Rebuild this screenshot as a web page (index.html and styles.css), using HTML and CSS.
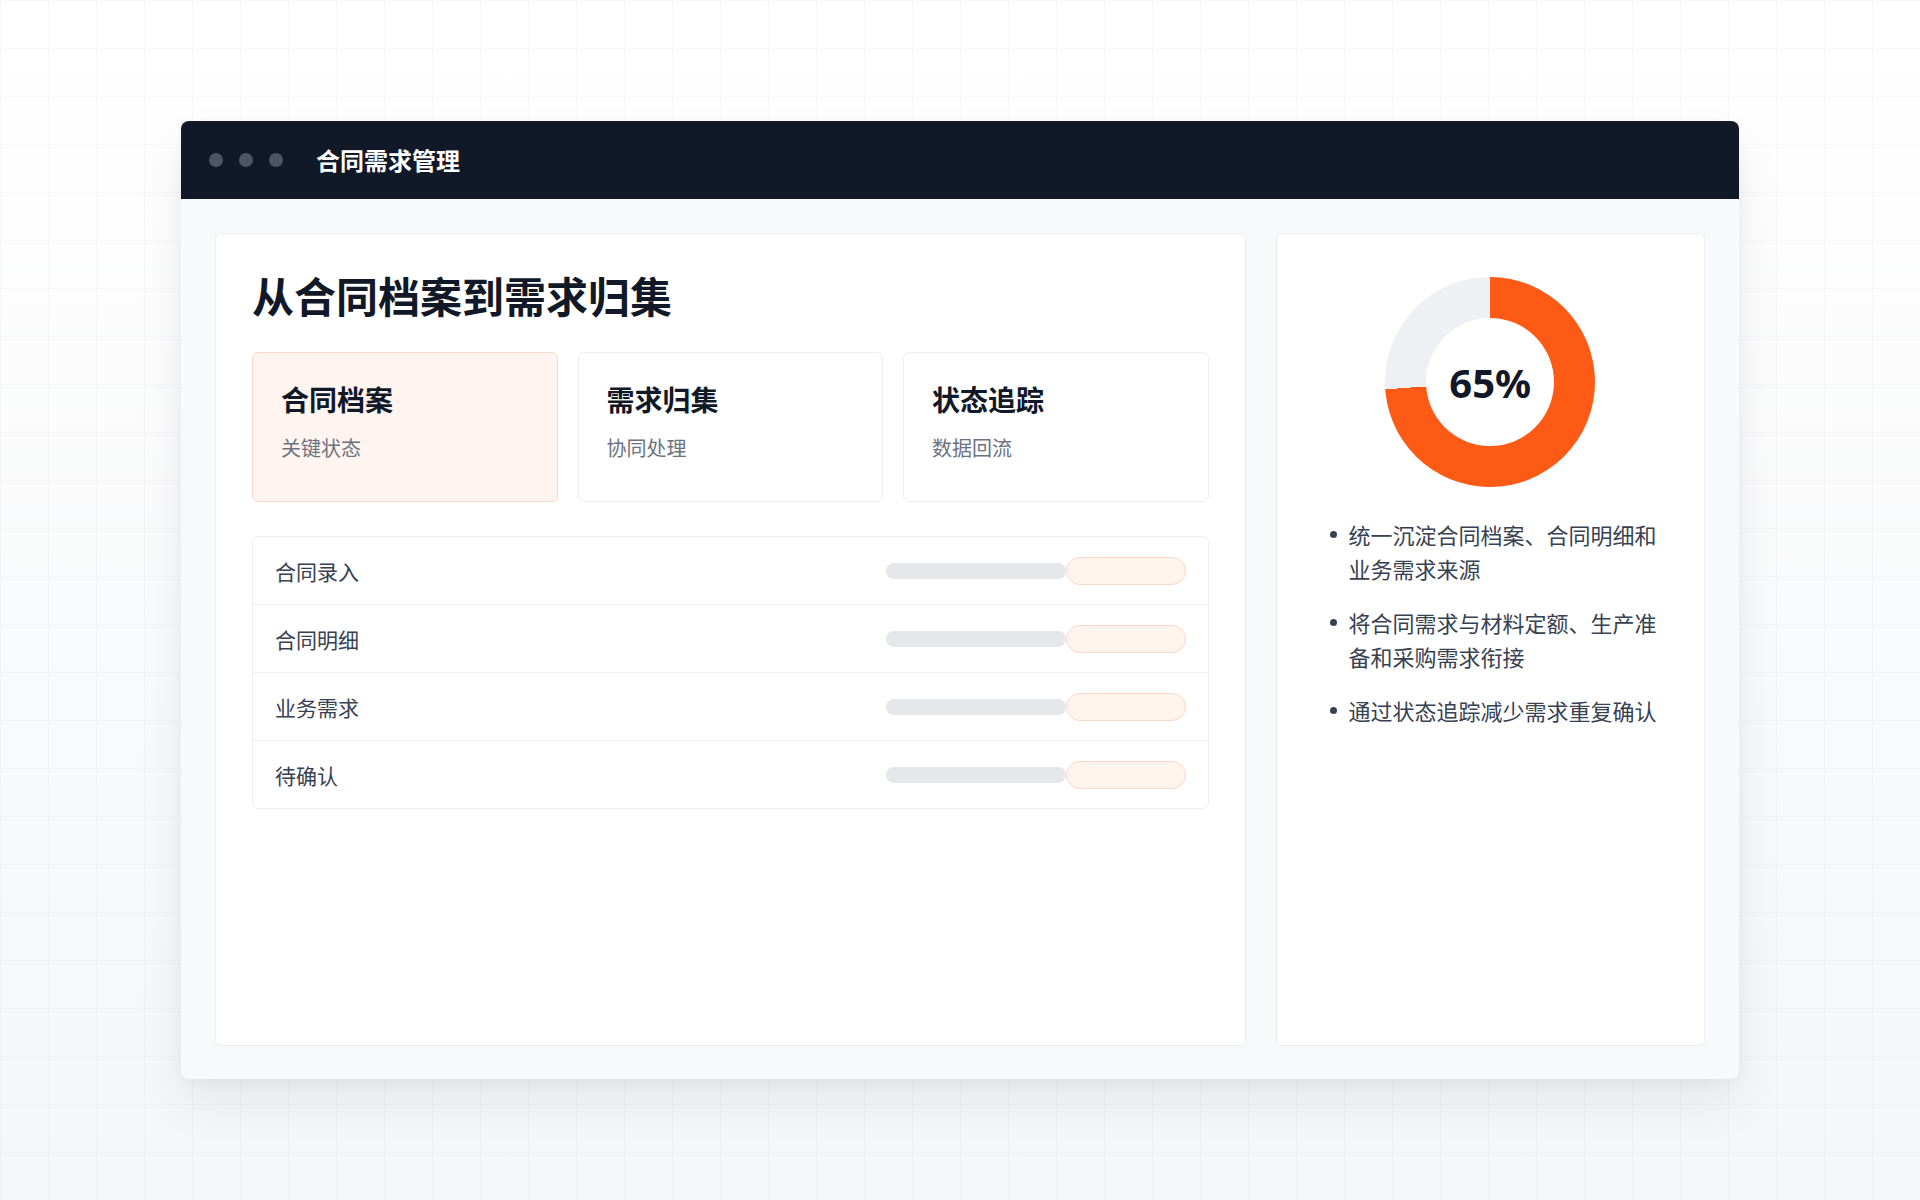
FILE: index.html
```html
<!DOCTYPE html>
<html lang="zh-CN">
<head>
<meta charset="utf-8">
<title>合同需求管理</title>
<link rel="stylesheet" href="styles.css">
</head>
<body>
<div class="page">
  <div class="window">
    <header class="titlebar">
      <div class="dots">
        <span class="dot"></span>
        <span class="dot"></span>
        <span class="dot"></span>
      </div>
      <div class="app-title">合同需求管理</div>
    </header>
    <div class="body">
      <section class="card main">
        <h1 class="heading">从合同档案到需求归集</h1>
        <div class="tiles">
          <div class="tile active">
            <div class="tile-title">合同档案</div>
            <div class="tile-sub">关键状态</div>
          </div>
          <div class="tile">
            <div class="tile-title">需求归集</div>
            <div class="tile-sub">协同处理</div>
          </div>
          <div class="tile">
            <div class="tile-title">状态追踪</div>
            <div class="tile-sub">数据回流</div>
          </div>
        </div>
        <div class="list">
          <div class="row">
            <span class="row-label">合同录入</span>
            <div class="bars"><span class="track"></span><span class="pill"></span></div>
          </div>
          <div class="row">
            <span class="row-label">合同明细</span>
            <div class="bars"><span class="track"></span><span class="pill"></span></div>
          </div>
          <div class="row">
            <span class="row-label">业务需求</span>
            <div class="bars"><span class="track"></span><span class="pill"></span></div>
          </div>
          <div class="row">
            <span class="row-label">待确认</span>
            <div class="bars"><span class="track"></span><span class="pill"></span></div>
          </div>
        </div>
      </section>
      <aside class="card side">
        <div class="donut">
          <div class="donut-hole">65%</div>
        </div>
        <ul class="points">
          <li><span class="bullet"></span><span>统一沉淀合同档案、合同明细和业务需求来源</span></li>
          <li><span class="bullet"></span><span>将合同需求与材料定额、生产准备和采购需求衔接</span></li>
          <li><span class="bullet"></span><span>通过状态追踪减少需求重复确认</span></li>
        </ul>
      </aside>
    </div>
  </div>
</div>
</body>
</html>
```

FILE: styles.css
```css
html, body {
  margin: 0;
  padding: 0;
}

body {
  font-family: "Noto Sans CJK SC", "Noto Sans", sans-serif;
  background-color: #fbfbfc;
  background-image:
    linear-gradient(rgba(15, 23, 42, 0.028) 1px, transparent 1px),
    linear-gradient(90deg, rgba(15, 23, 42, 0.028) 1px, transparent 1px),
    linear-gradient(180deg, #ffffff 0%, #f5f6f8 100%);
  background-size: 48px 48px, 48px 48px, 100% 100%;
}

.page {
  height: 1200px;
  display: flex;
  align-items: center;
  justify-content: center;
}

.window {
  width: 1558px;
  height: 958px;
  display: flex;
  flex-direction: column;
  background: #f8f9fb;
  border-radius: 8px;
  overflow: hidden;
  box-shadow: 0 24px 50px rgba(15, 23, 42, 0.07), 0 4px 14px rgba(15, 23, 42, 0.04);
}

.titlebar {
  height: 78px;
  flex: none;
  background: #111827;
  display: flex;
  align-items: center;
  padding-left: 28px;
  gap: 33px;
}

.dots {
  display: flex;
  gap: 16px;
}

.dot {
  width: 14px;
  height: 14px;
  border-radius: 50%;
  background: #4b5563;
}

.app-title {
  color: #ffffff;
  font-size: 24px;
  font-weight: 700;
  line-height: 1.3;
}

.body {
  flex: 1;
  display: grid;
  grid-template-columns: 2.4fr 1fr;
  gap: 30px;
  padding: 34px 34px 33px;
  min-height: 0;
}

.card {
  background: #ffffff;
  border: 1px solid #eceef2;
  border-radius: 6px;
}

.main {
  padding: 36px 36px;
}

.heading {
  margin: 0;
  font-size: 42px;
  line-height: 1.2;
  font-weight: 700;
  color: #111827;
}

.tiles {
  display: grid;
  grid-template-columns: repeat(3, 1fr);
  gap: 20px;
  margin-top: 32px;
}

.tile {
  height: 150px;
  box-sizing: border-box;
  padding: 28px;
  border: 1px solid #eceef2;
  border-radius: 6px;
  background: #ffffff;
}

.tile.active {
  background: #fff4ef;
  border-color: #fdd8c6;
}

.tile-title {
  font-size: 28px;
  font-weight: 700;
  line-height: 1.3;
  color: #111827;
}

.tile-sub {
  margin-top: 16px;
  font-size: 20px;
  line-height: 1.4;
  color: #6b7280;
}

.list {
  margin-top: 34px;
  border: 1px solid #eceef2;
  border-radius: 6px;
}

.row {
  height: 67px;
  display: flex;
  align-items: center;
  justify-content: space-between;
  padding: 0 22px;
}

.row + .row {
  border-top: 1px solid #eff0f4;
}

.row-label {
  font-size: 21px;
  color: #374151;
}

.bars {
  display: flex;
  align-items: center;
}

.track {
  width: 180px;
  height: 16px;
  border-radius: 8px;
  background: #e5e7eb;
}

.pill {
  width: 120px;
  height: 28px;
  box-sizing: border-box;
  border-radius: 14px;
  background: #fff4ee;
  border: 1px solid #fdd7c5;
}

.side {
  padding: 43px 36px 36px;
}

.donut {
  width: 210px;
  height: 210px;
  margin: 0 auto;
  border-radius: 50%;
  background: conic-gradient(#fc5a15 0deg 266deg, #eef0f3 266deg 360deg);
  display: flex;
  align-items: center;
  justify-content: center;
}

.donut-hole {
  width: 128px;
  height: 128px;
  border-radius: 50%;
  background: #ffffff;
  display: flex;
  align-items: center;
  justify-content: center;
  font-family: "Noto Sans", sans-serif;
  font-size: 40px;
  font-weight: 700;
  color: #111827;
}

.points {
  list-style: none;
  margin: 30px 0 0;
  padding: 0 0 0 17px;
  display: flex;
  flex-direction: column;
  gap: 20px;
}

.points li {
  display: flex;
  gap: 12px;
  font-size: 22px;
  line-height: 34px;
  color: #374151;
}

.bullet {
  flex: none;
  width: 7px;
  height: 7px;
  margin-top: 14px;
  border-radius: 50%;
  background: #374151;
}
```
